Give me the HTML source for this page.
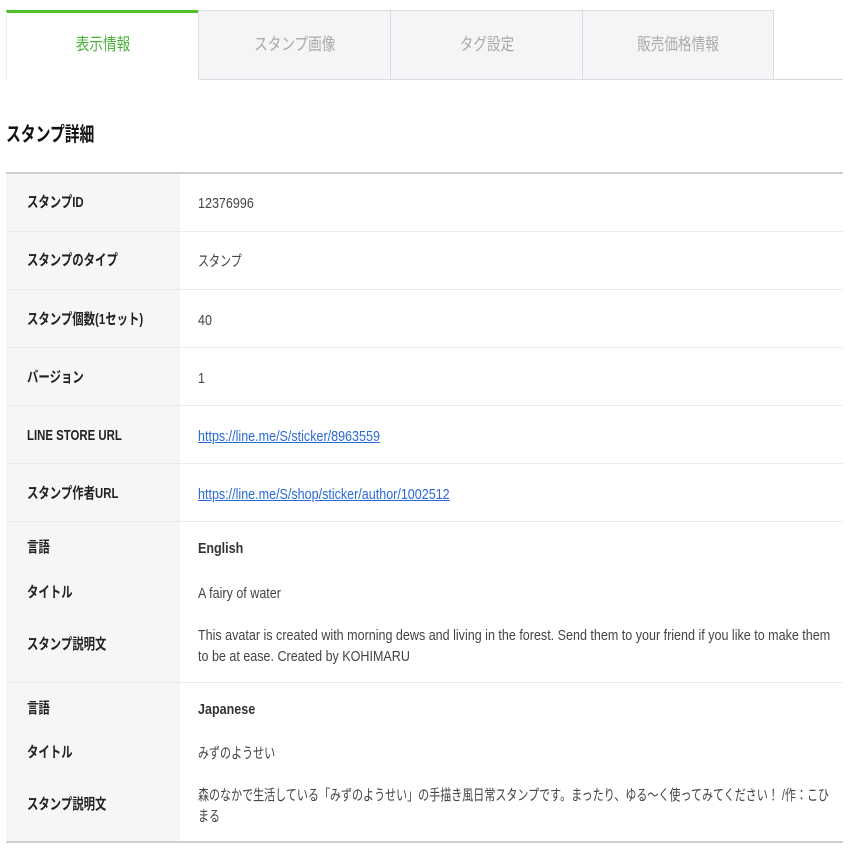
<!DOCTYPE html>
<html><head><meta charset="utf-8"><style>
*{margin:0;padding:0;box-sizing:border-box}
body{width:851px;height:851px;background:#fff;position:relative;overflow:hidden;font-family:"Liberation Sans","Noto Sans CJK JP",sans-serif;color:#333}
.a{position:absolute}
.t{display:inline-block;white-space:nowrap;transform:scaleX(.8);transform-origin:0 50%}
.e{transform:scaleX(.836)}
.j{transform:scaleX(.735)}
.tab{position:absolute;top:10px;height:70px;background:#f4f5f7;border:1px solid #dcdde0;color:#aaa;font-size:17px;line-height:68px;text-align:center}
.tab .t{transform-origin:50% 50%}
.lab{position:absolute;left:27px;font-size:15px;font-weight:bold;color:#222;line-height:20px}
.lab .t{transform:scaleX(.76)}
.val{position:absolute;left:198px;font-size:15px;color:#444;line-height:21px}
.hl{position:absolute;left:6px;width:837px;height:1px;background:#ebebeb}
a{color:#2a6ad8;text-decoration:underline}
</style></head><body>
<div class="a" style="left:6px;top:79px;width:837px;height:1px;background:#d6d7da"></div>
<div class="tab" style="left:6px;width:193px;background:#fff;border:none;border-top:3px solid #4fc02a;border-left:1px solid #eee;height:70px;color:#4db33d;line-height:64px"><span class="t">表示情報</span></div>
<div class="tab" style="left:198px;width:193px"><span class="t">スタンプ画像</span></div>
<div class="tab" style="left:390px;width:193px"><span class="t">タグ設定</span></div>
<div class="tab" style="left:582px;width:192px"><span class="t">販売価格情報</span></div>
<div class="a" style="left:6px;top:121px;font-size:20px;font-weight:bold;color:#111;line-height:28px"><span class="t" style="transform:scaleX(.74)">スタンプ詳細</span></div>
<div class="a" style="left:6px;top:172px;width:837px;height:2px;background:#cfd0d3"></div>
<div class="a" style="left:6px;top:174px;width:174px;height:667px;background:#f5f6f8"></div>
<div class="a" style="left:6px;top:841px;width:837px;height:2px;background:#cfd0d3"></div>
<div class="hl" style="top:231px"></div><div class="hl" style="top:289px"></div><div class="hl" style="top:347px"></div><div class="hl" style="top:405px"></div><div class="hl" style="top:463px"></div><div class="hl" style="top:521px"></div><div class="hl" style="top:682px"></div>
<div class="lab" style="top:193px"><span class="t">スタンプID</span></div><div class="val" style="top:193px"><span class="t e">12376996</span></div>
<div class="lab" style="top:251px"><span class="t">スタンプのタイプ</span></div><div class="val" style="top:251px"><span class="t j">スタンプ</span></div>
<div class="lab" style="top:310px"><span class="t">スタンプ個数(1セット)</span></div><div class="val" style="top:310px"><span class="t e">40</span></div>
<div class="lab" style="top:368px"><span class="t">バージョン</span></div><div class="val" style="top:368px"><span class="t e">1</span></div>
<div class="lab" style="top:426px"><span class="t">LINE STORE URL</span></div><div class="val" style="top:426px"><span class="t e"><a>https://line.me/S/sticker/8963559</a></span></div>
<div class="lab" style="top:484px"><span class="t">スタンプ作者URL</span></div><div class="val" style="top:484px"><span class="t e"><a>https://line.me/S/shop/sticker/author/1002512</a></span></div>
<div class="lab" style="top:538px"><span class="t">言語</span></div><div class="val" style="top:538px;font-weight:bold;color:#333"><span class="t e">English</span></div>
<div class="lab" style="top:583px"><span class="t">タイトル</span></div><div class="val" style="top:583px"><span class="t e">A fairy of water</span></div>
<div class="lab" style="top:635px"><span class="t">スタンプ説明文</span></div><div class="val" style="top:625px"><span class="t e">This avatar is created with morning dews and living in the forest. Send them to your friend if you like to make them<br>to be at ease. Created by KOHIMARU</span></div>
<div class="lab" style="top:699px"><span class="t">言語</span></div><div class="val" style="top:699px;font-weight:bold;color:#333"><span class="t e">Japanese</span></div>
<div class="lab" style="top:743px"><span class="t">タイトル</span></div><div class="val" style="top:743px"><span class="t j">みずのようせい</span></div>
<div class="lab" style="top:795px"><span class="t">スタンプ説明文</span></div><div class="val" style="top:785px"><span class="t j">森のなかで生活している「みずのようせい」の手描き風日常スタンプです。まったり、ゆる〜く使ってみてください！ /作：こひ<br>まる</span></div>
</body></html>
